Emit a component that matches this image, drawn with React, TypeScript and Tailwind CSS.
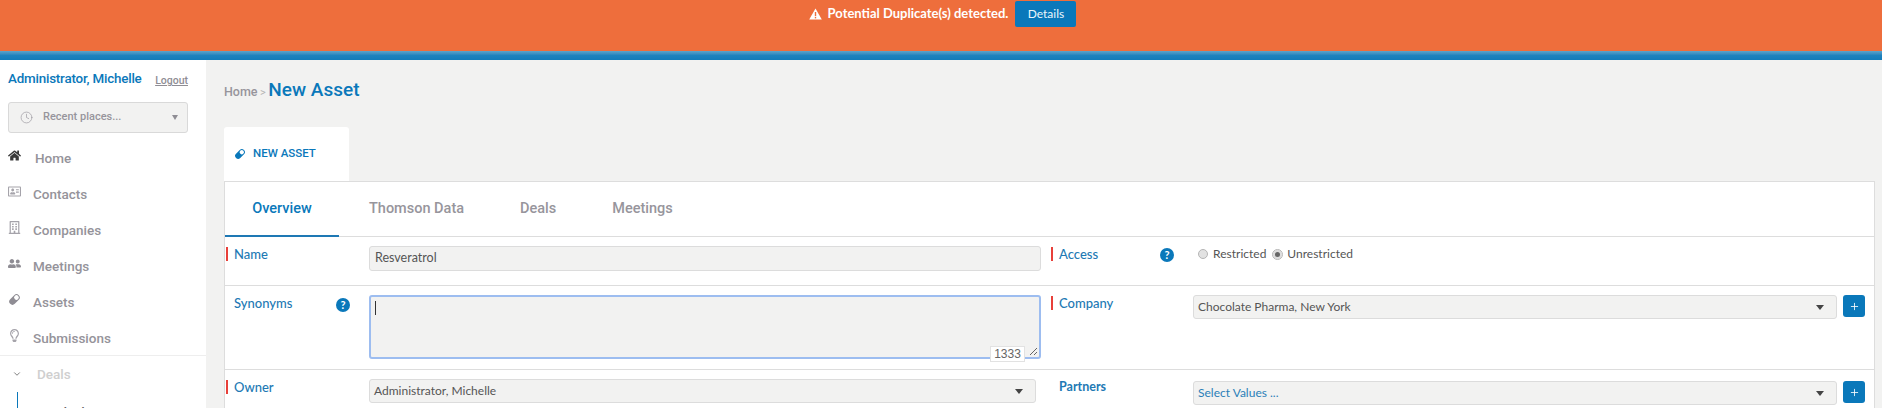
import React from "react";
import { ChevronDown, Clock, Plus } from "lucide-react";
import { FaHome, FaRegAddressCard, FaRegBuilding, FaUserFriends, FaRegLightbulb } from "react-icons/fa";

function PillIcon({ size, className }: { size: number; className?: string }) {
  return (
    <svg width={size} height={size} viewBox="0 0 16 16" className={className}>
      <g transform="rotate(-45 8 8)">
        <rect x="0.5" y="4" width="15" height="8" rx="4" fill="currentColor" />
        <rect x="8.6" y="5.2" width="5.6" height="5.6" rx="2.6" fill="#fff" />
      </g>
    </svg>
  );
}

function Alert() {
  return (
    <svg width="13" height="12" viewBox="0 0 13 12" className="mr-[6px]">
      <path d="M6.5 0.5 L12.8 11.5 L0.2 11.5 Z" fill="#fff" />
      <rect x="5.8" y="4" width="1.4" height="4.2" fill="#ee6e3c" />
      <rect x="5.8" y="9" width="1.4" height="1.4" fill="#ee6e3c" />
    </svg>
  );
}

const nav = [
  { label: "Home", Icon: FaHome, cls: "text-[#3a3a3a]", x: "pl-[35px]" },
  { label: "Contacts", Icon: FaRegAddressCard, cls: "text-[#a5a3aa]", x: "pl-[33px]" },
  { label: "Companies", Icon: FaRegBuilding, cls: "text-[#a5a3aa]", x: "pl-[33px]" },
  { label: "Meetings", Icon: FaUserFriends, cls: "text-[#8f8d94]", x: "pl-[33px]" },
  { label: "Assets", Icon: PillIcon, cls: "text-[#8f8d94]", x: "pl-[33px]" },
  { label: "Submissions", Icon: FaRegLightbulb, cls: "text-[#a5a3aa]", x: "pl-[33px]" },
];

function Help() {
  return (
    <span className="block w-[14px] h-[14px] rounded-full bg-[#0a78ba] text-white text-[11px] leading-[14px] font-bold text-center shrink-0">?</span>
  );
}

function Req() {
  return <span className="absolute left-[1px] top-[10px] w-[2px] h-[14px] bg-[#e8403a]" />;
}

function Caret() {
  return <span className="w-0 h-0 border-x-[4px] border-x-transparent border-t-[5px] border-t-[#444]" />;
}

function Select({ text, w, h = "h-[24px]", blue = false }: { text: string; w: string; h?: string; blue?: boolean }) {
  return (
    <div className={`${w} ${h} shrink-0 flex items-center justify-between pl-[4px] pr-[12px] bg-[#f2f2f1] border border-[#dcdcdc] rounded-[3px] text-[12px] ${blue ? "text-[#2b7fb8]" : "text-[#555]"}`}>
      <span>{text}</span>
      <Caret />
    </div>
  );
}

function PlusBtn() {
  return (
    <span className="w-[22px] h-[22px] ml-[6px] rounded-[3px] bg-[#0a78ba] text-white flex items-center justify-center shrink-0">
      <Plus size={11} strokeWidth={1.8} />
    </span>
  );
}

function Label({ text, req = false, bold = false }: { text: string; req?: boolean; bold?: boolean }) {
  return (
    <>
      {req && <Req />}
      <span className={`${bold ? "text-[12.5px] font-bold" : "text-[13px] font-medium"} text-[#2279b4] leading-[16px]`}>{text}</span>
    </>
  );
}

export default function App() {
  return (
    <div className="h-[408px] w-[1882px] overflow-hidden bg-[#f2f2f1] font-['Lato','Noto_Sans',sans-serif]">
      <div className="h-[51px] bg-[#ee6e3c] flex justify-center items-start pt-[1px]">
        <div className="flex items-center h-[26px] ml-[3px]">
          <Alert />
          <span className="text-[13px] font-bold text-white">Potential Duplicate(s) detected.</span>
          <span className="ml-[7px] w-[61px] h-[26px] rounded-[2px] bg-[#0a78ba] text-[#eaf6fc] text-[12px] flex items-center justify-center">Details</span>
        </div>
      </div>
      <div className="h-[9px] bg-gradient-to-b from-[#5ea4c9] via-[#1e82bd] to-[#137cba]" />
      <div className="flex h-[348px]">
        <aside className="w-[206px] shrink-0 bg-white font-['Roboto',sans-serif]">
          <div className="w-[188px] flex justify-between items-center pl-[8px] h-[42px]">
            <span className="text-[13.4px] font-medium text-[#0a78ba] tracking-[-0.2px] -mt-[3px]">Administrator, Michelle</span>
            <span className="text-[10.5px] font-medium text-[#8f8d94] underline">Logout</span>
          </div>
          <div className="ml-[8px] w-[180px] h-[31px] bg-[#f2f2f1] border border-[#d9d9d9] rounded-[3px] flex items-center pl-[11px] pr-[9px] text-[#97959c]">
            <Clock size={13} strokeWidth={1.2} />
            <span className="ml-[10px] text-[11px] font-medium">Recent places...</span>
            <span className="ml-auto w-0 h-0 border-x-[3px] border-x-transparent border-t-[5px] border-t-[#8f8d94]" />
          </div>
          <div className="mt-[7px]">
            {nav.map(({ label, Icon, cls, x }) => (
              <div key={label} className={`relative h-[36px] flex items-center ${x} text-[13.5px] font-medium text-[#95939a]`}>
                <Icon size={13} className={`absolute left-[8px] top-[9px] ${cls}`} />
                {label}
              </div>
            ))}
          </div>
          <div className="border-t border-[#eeeeee] mt-[-1px]">
            <div className="h-[36px] flex items-center pl-[12px] text-[13.5px] font-medium text-[#cfcfcf]">
              <ChevronDown size={10} strokeWidth={2} className="text-[#666]" />
              <span className="ml-[15px]">Deals</span>
            </div>
            <div className="ml-[17px] border-l border-[#0a78ba] h-[30px] pl-[20px] pt-[12px] text-[13px] font-medium text-[#666] leading-[18px]">Tracked assets</div>
          </div>
        </aside>
        <main className="flex-1 min-w-0 pl-[18px] pr-[7px]">
          <div className="h-[67px] flex items-baseline pt-[16px] font-['Roboto',sans-serif]">
            <span className="text-[12.5px] font-medium text-[#97959c]">Home</span>
            <span className="text-[11px] text-[#b5b5b5] mx-[2.5px]">&gt;</span>
            <span className="text-[19px] font-medium text-[#0a78ba]">New Asset</span>
          </div>
          <div className="w-[125px] h-[54px] bg-white rounded-t-[3px] flex items-center pl-[10px] font-['Roboto',sans-serif]">
            <PillIcon size={12} className="text-[#0a78ba]" />
            <span className="ml-[7px] text-[11.5px] font-medium text-[#0a78ba]">NEW ASSET</span>
          </div>
          <div className="bg-white border-t border-l border-[#dddddd] border-r">
            <div className="h-[55px] flex items-stretch border-b border-[#dddddd] font-['Roboto',sans-serif] text-[14.5px] font-medium text-[#97959c]">
              <div className="w-[114px] border-b-2 border-[#1e78b4] -mb-[1px] text-[#0a78ba] flex items-center justify-center">Overview</div>
              <div className="ml-[30px] flex items-center">Thomson Data</div>
              <div className="ml-[56px] flex items-center">Deals</div>
              <div className="ml-[56px] flex items-center">Meetings</div>
            </div>
            <div className="flex h-[49px] border-b border-[#dddddd]">
              <div className="relative w-[825px] shrink-0 flex pl-[9px] pt-[9px]">
                <Label text="Name" req />
                <div className="absolute left-[144px] top-[9px] w-[672px] h-[25px] bg-[#f2f2f1] border border-[#dcdcdc] rounded-[3px] flex items-center pl-[5px] text-[12.5px] text-[#555]">Resveratrol</div>
              </div>
              <div className="relative flex-1 pl-[9px] pt-[9px] flex">
                <Label text="Access" req />
                <span className="ml-[62px] mt-[2px]"><Help /></span>
                <div className="ml-[24px] flex items-center h-[16px] text-[12px] text-[#555]">
                  <span className="w-[10px] h-[10px] rounded-full bg-[#e2e2e2] border border-[#b5b5b5]" />
                  <span className="ml-[5px]">Restricted</span>
                  <span className="ml-[7px] w-[9px] h-[9px] rounded-full bg-[#666] border-[2px] border-[#dddddd] outline outline-1 outline-[#b5b5b5]" />
                  <span className="ml-[5px]">Unrestricted</span>
                </div>
              </div>
            </div>
            <div className="flex h-[84px] border-b border-[#dddddd]">
              <div className="relative w-[825px] shrink-0 flex pl-[9px] pt-[9px]">
                <Label text="Synonyms" />
                <span className="absolute left-[111px] top-[12px]"><Help /></span>
                <div className="absolute left-[144px] top-[9px] w-[672px] h-[64px] bg-[#f2f2f1] border-2 border-[#9dbdf0] rounded-[3px] pl-[4px] pt-[4px]">
                  <div className="w-px h-[14px] bg-[#333]" />
                  <svg width="9" height="9" viewBox="0 0 9 9" className="absolute right-[1px] bottom-[1px]">
                    <path d="M1 8 L8 1 M5 8 L8 5" stroke="#666" strokeWidth="1" />
                  </svg>
                </div>
                <div className="absolute left-[765px] top-[60px] w-[35px] h-[16px] bg-white border border-[#e2e2e2] text-[12px] leading-[14px] text-center text-[#666] font-['Liberation_Sans',sans-serif]">1333</div>
              </div>
              <div className="relative flex-1 pl-[9px] pt-[9px] flex">
                <Label text="Company" req />
                <div className="absolute left-[143px] top-[9px] flex items-start">
                  <Select text="Chocolate Pharma, New York" w="w-[644px]" />
                  <PlusBtn />
                </div>
              </div>
            </div>
            <div className="flex h-[60px]">
              <div className="relative w-[825px] shrink-0 flex pl-[9px] pt-[9px]">
                <Label text="Owner" req />
                <div className="absolute left-[144px] top-[9px]">
                  <Select text="Administrator, Michelle" w="w-[667px]" />
                </div>
              </div>
              <div className="relative flex-1 pl-[9px] pt-[9px] flex">
                <Label text="Partners" bold />
                <div className="absolute left-[143px] top-[11px] flex items-start">
                  <Select text="Select Values ..." w="w-[644px]" blue />
                  <PlusBtn />
                </div>
              </div>
            </div>
          </div>
        </main>
      </div>
    </div>
  );
}
